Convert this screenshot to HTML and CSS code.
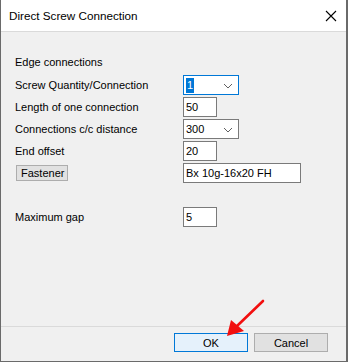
FILE: index.html
```html
<!DOCTYPE html>
<html lang="en">
<head>
    <meta charset="UTF-8">
    <meta name="viewport" content="width=device-width, initial-scale=1.0">
    <title>Direct Screw Connection</title>
    <link rel="stylesheet" href="styles.css">
</head>
<body>

    <div class="window">
        <div class="titlebar">
            <span class="title">Direct Screw Connection</span>
            <svg class="close" width="12" height="12" viewBox="0 0 12 12">
                <path d="M1 1 L11 11 M11 1 L1 11" stroke="#000" stroke-width="1.1" fill="none"/>
            </svg>
        </div>

        <div class="content">
            <div class="section-title">Edge connections</div>

            <div class="form-grid">
                <div class="label">Screw Quantity/Connection</div>
                <div class="combo focused">
                    <span class="selected">1</span>
                    <svg class="chevron" width="10" height="6" viewBox="0 0 10 6"><path d="M1 1 L5 5 L9 1" stroke="#606060" fill="none"/></svg>
                </div>

                <div class="label">Length of one connection</div>
                <div class="textbox short">50</div>

                <div class="label">Connections c/c distance</div>
                <div class="combo">
                    <span>300</span>
                    <svg class="chevron" width="10" height="6" viewBox="0 0 10 6"><path d="M1 1 L5 5 L9 1" stroke="#606060" fill="none"/></svg>
                </div>

                <div class="label">End offset</div>
                <div class="textbox short">20</div>

                <div class="label"><span class="small-btn">Fastener</span></div>
                <div class="textbox wide">Bx 10g-16x20 FH</div>
            </div>

            <div class="form-grid gap-row">
                <div class="label">Maximum gap</div>
                <div class="textbox short">5</div>
            </div>
        </div>

        <div class="footer">
            <button class="btn primary">OK</button>
            <button class="btn">Cancel</button>
        </div>

        <svg class="arrow" width="348" height="362" viewBox="0 0 348 362">
            <line x1="263" y1="301" x2="237" y2="326" stroke="#f20f0f" stroke-width="2.6" stroke-linecap="round"/>
            <polygon points="227,336 231,320 244,331" fill="#f20f0f"/>
        </svg>
    </div>

</body>
</html>
```

FILE: styles.css
```css
body {
    margin: 0;
    font-family: "Liberation Sans", Arial, sans-serif;
    font-size: 11px;
    color: #000;
}
.window {
    position: relative;
    width: 348px;
    height: 362px;
    box-sizing: border-box;
    background: #f0f0f0;
    border-left: 1px solid #6a6a6a;
    border-right: 2px solid #6a6a6a;
    border-bottom: 1px solid #6a6a6a;
    display: flex;
    flex-direction: column;
}
.titlebar {
    height: 31px;
    background: #fff;
    border-bottom: 1px solid #dadada;
    display: flex;
    align-items: center;
    justify-content: space-between;
    padding: 0 8px 0 8px;
    flex-shrink: 0;
}
.title {
    font-size: 11.7px;
}
.close {
    margin-right: 1px;
}
.content {
    padding: 22px 0 0 14px;
}
.section-title {
    height: 16px;
    line-height: 16px;
    margin-bottom: 5px;
}
.form-grid {
    display: grid;
    grid-template-columns: 168px auto;
    grid-auto-rows: 20px;
    row-gap: 2px;
}
.gap-row {
    margin-top: 24px;
}
.label {
    display: flex;
    align-items: center;
    line-height: 16px;
}
.small-btn {
    display: inline-block;
    box-sizing: border-box;
    width: 52px;
    height: 16px;
    line-height: 14px;
    margin-left: 1px;
    padding-left: 4px;
    background: #e1e1e1;
    border: 1px solid #adadad;
}
.textbox,
.combo {
    box-sizing: border-box;
    height: 20px;
    background: #fff;
    border: 1px solid #7a7a7a;
    display: flex;
    align-items: center;
    padding-left: 2px;
}
.textbox.short {
    width: 34px;
}
.textbox.wide {
    width: 118px;
}
.combo {
    width: 56px;
    justify-content: space-between;
    padding-right: 5px;
}
.combo.focused {
    border-color: #0078d7;
}
.selected {
    background: #0078d7;
    color: #fff;
    line-height: 15px;
    padding: 0 1px;
}
.chevron {
    margin-top: 1px;
}
.footer {
    margin-top: auto;
    border-top: 1px solid #dadada;
    padding: 6px 18px 9px 0;
    display: flex;
    justify-content: flex-end;
    gap: 6px;
}
.btn {
    box-sizing: border-box;
    width: 74px;
    height: 19px;
    margin: 0;
    padding: 0;
    font-family: "Liberation Sans", Arial, sans-serif;
    font-size: 11px;
    color: #000;
    background: #e1e1e1;
    border: 1px solid #adadad;
}
.btn.primary {
    background: #e5f1fb;
    border-color: #0078d7;
}
.arrow {
    position: absolute;
    left: -1px;
    top: 0;
    pointer-events: none;
}
```
